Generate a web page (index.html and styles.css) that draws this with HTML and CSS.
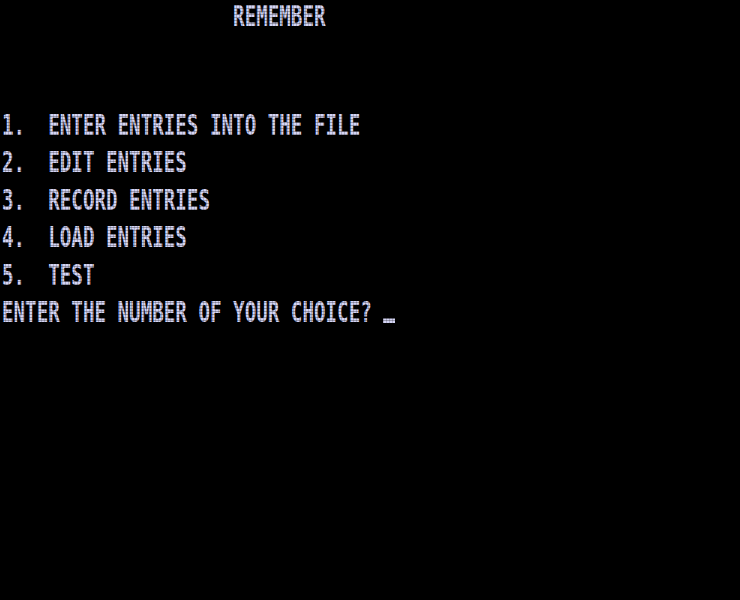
FILE: index.html
```html
<!DOCTYPE html>
<html lang="en">
<head>
    <meta charset="UTF-8">
    <title>Remember</title>
    <link rel="stylesheet" href="styles.css">
</head>
<body>

    <!-- 64 x 16 text screen -->
    <div class="screen">
        <div class="row title">                    REMEMBER</div>
        <div class="row"></div>
        <div class="row"></div>
        <div class="row">1.  ENTER ENTRIES INTO THE FILE</div>
        <div class="row">2.  EDIT ENTRIES</div>
        <div class="row">3.  RECORD ENTRIES</div>
        <div class="row">4.  LOAD ENTRIES</div>
        <div class="row">5.  TEST</div>
        <div class="row">ENTER THE NUMBER OF YOUR CHOICE? <span class="cursor"></span></div>
    </div>

</body>
</html>
```

FILE: styles.css
```css
html, body {
    margin: 0;
    padding: 0;
    background: #000;
}

.screen {
    width: 740px;
    height: 600px;
    box-sizing: border-box;
    padding-left: 2px;
    position: relative;
    overflow: hidden;
    background: #000;
    color: #d4d4f4;
    font-family: "DejaVu Sans Mono", monospace;
    font-weight: bold;
    font-size: 19.2px;
}

/* faint scanline / dot grid over the text */
.screen::after {
    content: "";
    position: absolute;
    inset: 0;
    pointer-events: none;
    background:
        repeating-linear-gradient(to bottom, rgba(0, 0, 0, 0) 0 2px, rgba(0, 0, 0, 0.28) 2px 3px),
        repeating-linear-gradient(to right, rgba(0, 0, 0, 0) 0 2px, rgba(0, 0, 0, 0.18) 2px 3px);
}

/* each text row is 1/16 of the screen */
.row {
    height: 37.5px;
    line-height: 1.17;
    white-space: pre;
    letter-spacing: 0.0025px;
}

.row:not(:empty) {
    transform: translateY(-4px) scaleY(1.5);
    transform-origin: 0 0;
}

/* top row can't rise above the screen edge */
.row.title {
    transform: scaleY(1.5);
}

.cursor {
    display: inline-block;
    width: 12px;
    height: 3px;
    background: #d4d4f4;
    vertical-align: baseline;
    transform: translateY(1px);
}
```
